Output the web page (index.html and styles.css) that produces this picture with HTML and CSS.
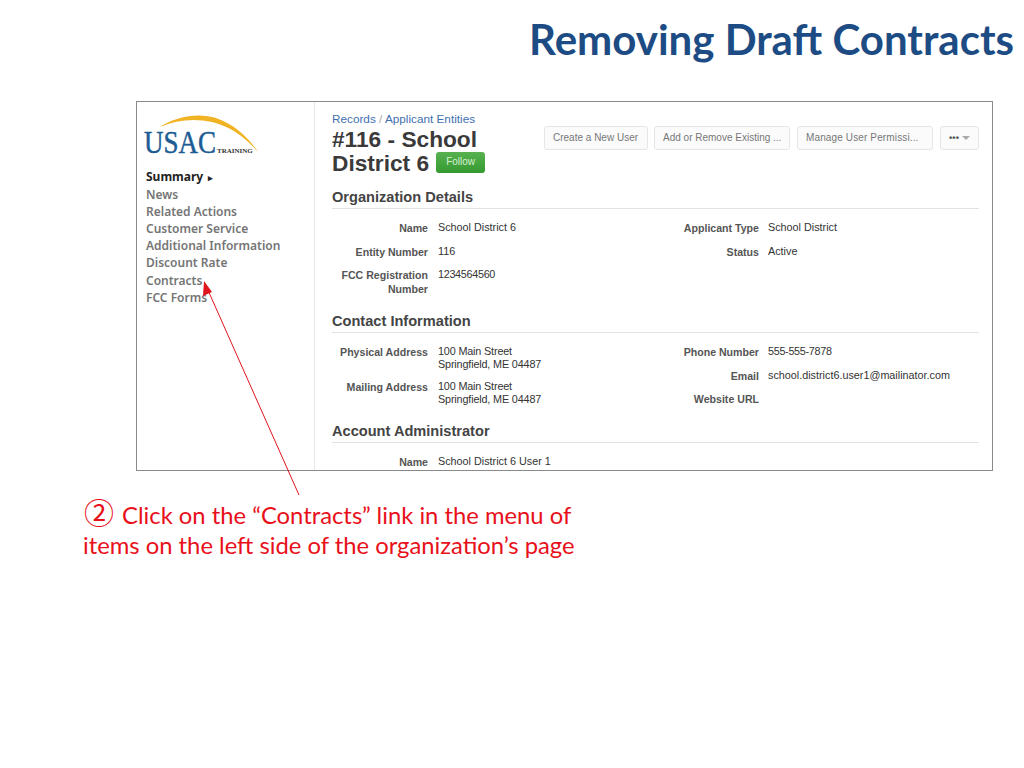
FILE: index.html
```html
<!DOCTYPE html>
<html lang="en">
<head>
    <meta charset="UTF-8">
    <meta name="viewport" content="width=device-width, initial-scale=1.0">
    <title>Removing Draft Contracts</title>
    <link rel="stylesheet" href="styles.css">
</head>
<body>
    <div class="slide">
        <h1 class="slide-title">Removing Draft Contracts</h1>

        <div class="shot">
            <div class="sidebar">
                <svg class="logo" width="120" height="48" viewBox="0 0 120 48">
                    <path d="M16 13 C30 3 55 -2 72 4 C90 10 105 24 114 38 C100 22 85 12 68 8 C50 4 32 6 16 13 Z" fill="#f0b323"/>
                    <text class="logo-usac" transform="translate(0 39) scale(1 1.2)">USAC</text>
                    <text x="73" y="39" class="logo-training">TRAINING</text>
                </svg>
                <ul class="side-menu">
                    <li class="active">Summary <span class="caret">▸</span></li>
                    <li>News</li>
                    <li>Related Actions</li>
                    <li>Customer Service</li>
                    <li>Additional Information</li>
                    <li>Discount Rate</li>
                    <li>Contracts</li>
                    <li>FCC Forms</li>
                </ul>
            </div>

            <div class="main">
                <div class="page-head">
                    <div class="page-title">
                        <div class="crumbs"><a>Records</a> <span>/</span> <a>Applicant Entities</a></div>
                        <h2>#116 - School</h2>
                        <div class="title-row">
                            <h2>District 6</h2>
                            <span class="btn-follow">Follow</span>
                        </div>
                    </div>
                    <div class="actions">
                        <span class="btn btn-user">Create a New User</span>
                        <span class="btn btn-existing">Add or Remove Existing ...</span>
                        <span class="btn btn-perm">Manage User Permissi...</span>
                        <span class="btn btn-more"><b>•••</b><i class="arrow-down"></i></span>
                    </div>
                </div>

                <h3 class="section">Organization Details</h3>
                <div class="details details-org">
                    <div class="col">
                        <div class="row"><label>Name</label><span>School District 6</span></div>
                        <div class="row"><label>Entity Number</label><span>116</span></div>
                        <div class="row"><label>FCC Registration Number</label><span class="digits">1234564560</span></div>
                    </div>
                    <div class="col">
                        <div class="row"><label>Applicant Type</label><span>School District</span></div>
                        <div class="row"><label>Status</label><span>Active</span></div>
                    </div>
                </div>

                <h3 class="section">Contact Information</h3>
                <div class="details details-contact">
                    <div class="col">
                        <div class="row"><label>Physical Address</label><span class="address">100 Main Street<br>Springfield, ME 04487</span></div>
                        <div class="row"><label>Mailing Address</label><span class="address">100 Main Street<br>Springfield, ME 04487</span></div>
                    </div>
                    <div class="col">
                        <div class="row"><label>Phone Number</label><span class="digits">555-555-7878</span></div>
                        <div class="row"><label>Email</label><span>school.district6.user1@mailinator.com</span></div>
                        <div class="row"><label>Website URL</label><span></span></div>
                    </div>
                </div>

                <h3 class="section">Account Administrator</h3>
                <div class="details details-admin">
                    <div class="col">
                        <div class="row"><label>Name</label><span>School District 6 User 1</span></div>
                    </div>
                </div>
            </div>
        </div>

        <p class="note"><span class="num">②</span> Click on the “Contracts” link in the menu of<br>items on the left side of the organization’s page</p>

        <!-- callout arrow from the note up to the menu item -->
        <svg class="callout" width="1024" height="768" viewBox="0 0 1024 768">
            <line x1="299" y1="495" x2="207" y2="288" stroke="#e0141c" stroke-width="1"/>
            <polygon points="204,281 212,292 203,296" fill="#e0141c"/>
        </svg>
    </div>
</body>
</html>
```

FILE: styles.css
```css
* {
    margin: 0;
    padding: 0;
    box-sizing: border-box;
}

body {
    background: white;
    font-family: "Liberation Sans", Arial, sans-serif;
}

.slide {
    position: relative;
    width: 1024px;
    height: 768px;
    overflow: hidden;
}

.slide-title {
    height: 101px;
    padding: 15px 10px 0 0;
    text-align: right;
    font-family: Lato, sans-serif;
    font-size: 42px;
    line-height: 48px;
    font-weight: 700;
    color: #1d4c84;
}

.shot {
    display: flex;
    width: 857px;
    height: 370px;
    margin-left: 136px;
    border: 1px solid #8a8a8a;
    overflow: hidden;
}

.sidebar {
    width: 178px;
    flex-shrink: 0;
    border-right: 1px solid #e8e8e8;
    padding: 12px 0 0 7px;
}

.logo {
    display: block;
}

.logo-usac {
    font-family: "Liberation Serif", serif;
    font-size: 27px;
    fill: #1b5c94;
    stroke: #1b5c94;
    stroke-width: 0.4;
}

.logo-training {
    font-family: "Liberation Serif", serif;
    font-size: 7px;
    font-weight: 700;
    fill: #333;
}

.side-menu {
    list-style: none;
    margin-top: 6px;
    padding-left: 2px;
    font-family: "Noto Sans", sans-serif;
    font-size: 12px;
    font-weight: 600;
    line-height: 17.1px;
    color: #757575;
}

.side-menu .active {
    color: #222;
    font-weight: 700;
}

.caret {
    margin-left: 2px;
    font-size: 9px;
}

.main {
    flex: 1;
    padding: 9px 13px 0 17px;
    color: #333;
}

.page-head {
    display: flex;
    justify-content: space-between;
    height: 77px;
}

.page-title {
    width: 200px;
}

.crumbs {
    font-size: 11.75px;
    line-height: 16px;
    color: #aaa;
}

.crumbs a {
    color: #3f6fb0;
}

.page-title h2 {
    font-size: 22.7px;
    line-height: 24px;
    font-weight: 700;
    color: #3a3a3a;
}

.title-row {
    display: flex;
    align-items: flex-start;
    gap: 7px;
}

.btn-follow {
    width: 49px;
    height: 21px;
    margin-top: 1px;
    border-radius: 3px;
    background: linear-gradient(#58b14f, #349a30);
    color: #d6efd3;
    font-size: 10px;
    line-height: 20px;
    text-align: center;
}

.actions {
    display: flex;
    margin-top: 15px;
}

.btn {
    display: block;
    height: 24px;
    border: 1px solid #e6e6e6;
    border-radius: 3px;
    background: #fbfbfb;
    color: #777;
    font-size: 10px;
    line-height: 22px;
    padding-left: 8px;
    white-space: nowrap;
}

.btn-user { width: 104px; }
.btn-existing { width: 136px; margin-left: 6px; }
.btn-perm { width: 136px; margin-left: 7px; letter-spacing: 0.13px; }
.btn-more { width: 39px; margin-left: 7px; }

.btn-more b {
    font-size: 9.5px;
    color: #555;
}

.arrow-down {
    display: inline-block;
    margin-left: 3px;
    vertical-align: 1px;
    border-left: 4px solid transparent;
    border-right: 4px solid transparent;
    border-top: 4px solid #aaa;
}

.section {
    height: 21px;
    border-bottom: 1px solid #e2e2e2;
    font-size: 14.6px;
    line-height: 18px;
    font-weight: 700;
    color: #444;
}

.details {
    display: flex;
    padding-top: 12px;
    font-size: 10.8px;
    line-height: 12.5px;
}

.details-org { height: 103px; }
.details-contact { height: 89px; }

.col {
    width: 350px;
    flex-shrink: 0;
}

.col + .col {
    width: 300px;
    margin-left: -18px;
}

.row {
    display: flex;
    margin-bottom: 9.5px;
}

.details-contact .col:first-child .row {
    margin-bottom: 10px;
}

.row label {
    width: 96px;
    flex-shrink: 0;
    margin-right: 10px;
    text-align: right;
    font-size: 10.6px;
    font-weight: 700;
    line-height: 14px;
    color: #555;
}

.col + .col .row label {
    width: 95px;
    margin-right: 9px;
}

.row span {
    color: #333;
}

.row .digits {
    letter-spacing: -0.3px;
}

.row .address {
    letter-spacing: -0.15px;
}

.note {
    margin: 28px 0 0 83px;
    font-family: Lato, sans-serif;
    font-size: 23.8px;
    line-height: 30px;
    color: #e8101a;
}

.num {
    margin: 0 2px 0 1px;
    font-family: "Noto Sans CJK JP", sans-serif;
    font-size: 30px;
    font-weight: 400;
    line-height: 24px;
}

.callout {
    position: absolute;
    top: 0;
    left: 0;
    pointer-events: none;
}
```
